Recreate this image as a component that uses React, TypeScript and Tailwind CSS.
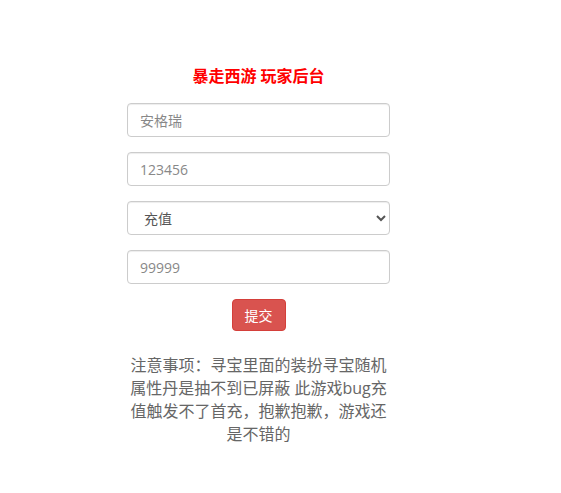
import { useState } from "react";

const FONT = { fontFamily: '"Open Sans", "Noto Sans CJK SC", sans-serif' };

export default function App() {
  const [name, setName] = useState("");
  const [pwd, setPwd] = useState("");
  const [kind, setKind] = useState("充值");
  const [amount, setAmount] = useState("");

  const inputCls =
    "block w-full h-[34px] px-3 text-[14px] text-[#555] bg-white border border-[#ccc] rounded-[4px] shadow-[inset_0_1px_1px_rgba(0,0,0,0.075)] outline-none placeholder:text-[#888]";

  return (
    <div className="min-h-[493px] bg-white" style={FONT}>
      <div className="ml-[127px] w-[263px] pt-[65px]">
        <h3 className="text-center text-[16px] leading-[22px] font-bold text-[#ff0000]">
          暴走西游 玩家后台
        </h3>

        <div className="mt-[16px] flex flex-col gap-[15px]">
          <input
            className={inputCls}
            placeholder="安格瑞"
            value={name}
            onChange={(e) => setName(e.target.value)}
          />
          <input
            className={inputCls}
            placeholder="123456"
            value={pwd}
            onChange={(e) => setPwd(e.target.value)}
          />
          <select
            className={inputCls + " pl-[12px] text-[#555]"}
            value={kind}
            onChange={(e) => setKind(e.target.value)}
          >
            <option>充值</option>
          </select>
          <input
            className={inputCls}
            placeholder="99999"
            value={amount}
            onChange={(e) => setAmount(e.target.value)}
          />
        </div>

        <div className="mt-[15px] flex justify-center">
          <button className="h-[32px] px-[12px] text-[14px] text-white bg-[#d9534f] border border-[#d43f3a] rounded-[4px]">
            提交
          </button>
        </div>

        <p className="mt-[23px] text-center text-[16px] leading-[23px] text-[#666]">
          注意事项：寻宝里面的装扮寻宝随机属性丹是抽不到已屏蔽 此游戏bug充值触发不了首充，抱歉抱歉，游戏还是不错的
        </p>
      </div>
    </div>
  );
}
